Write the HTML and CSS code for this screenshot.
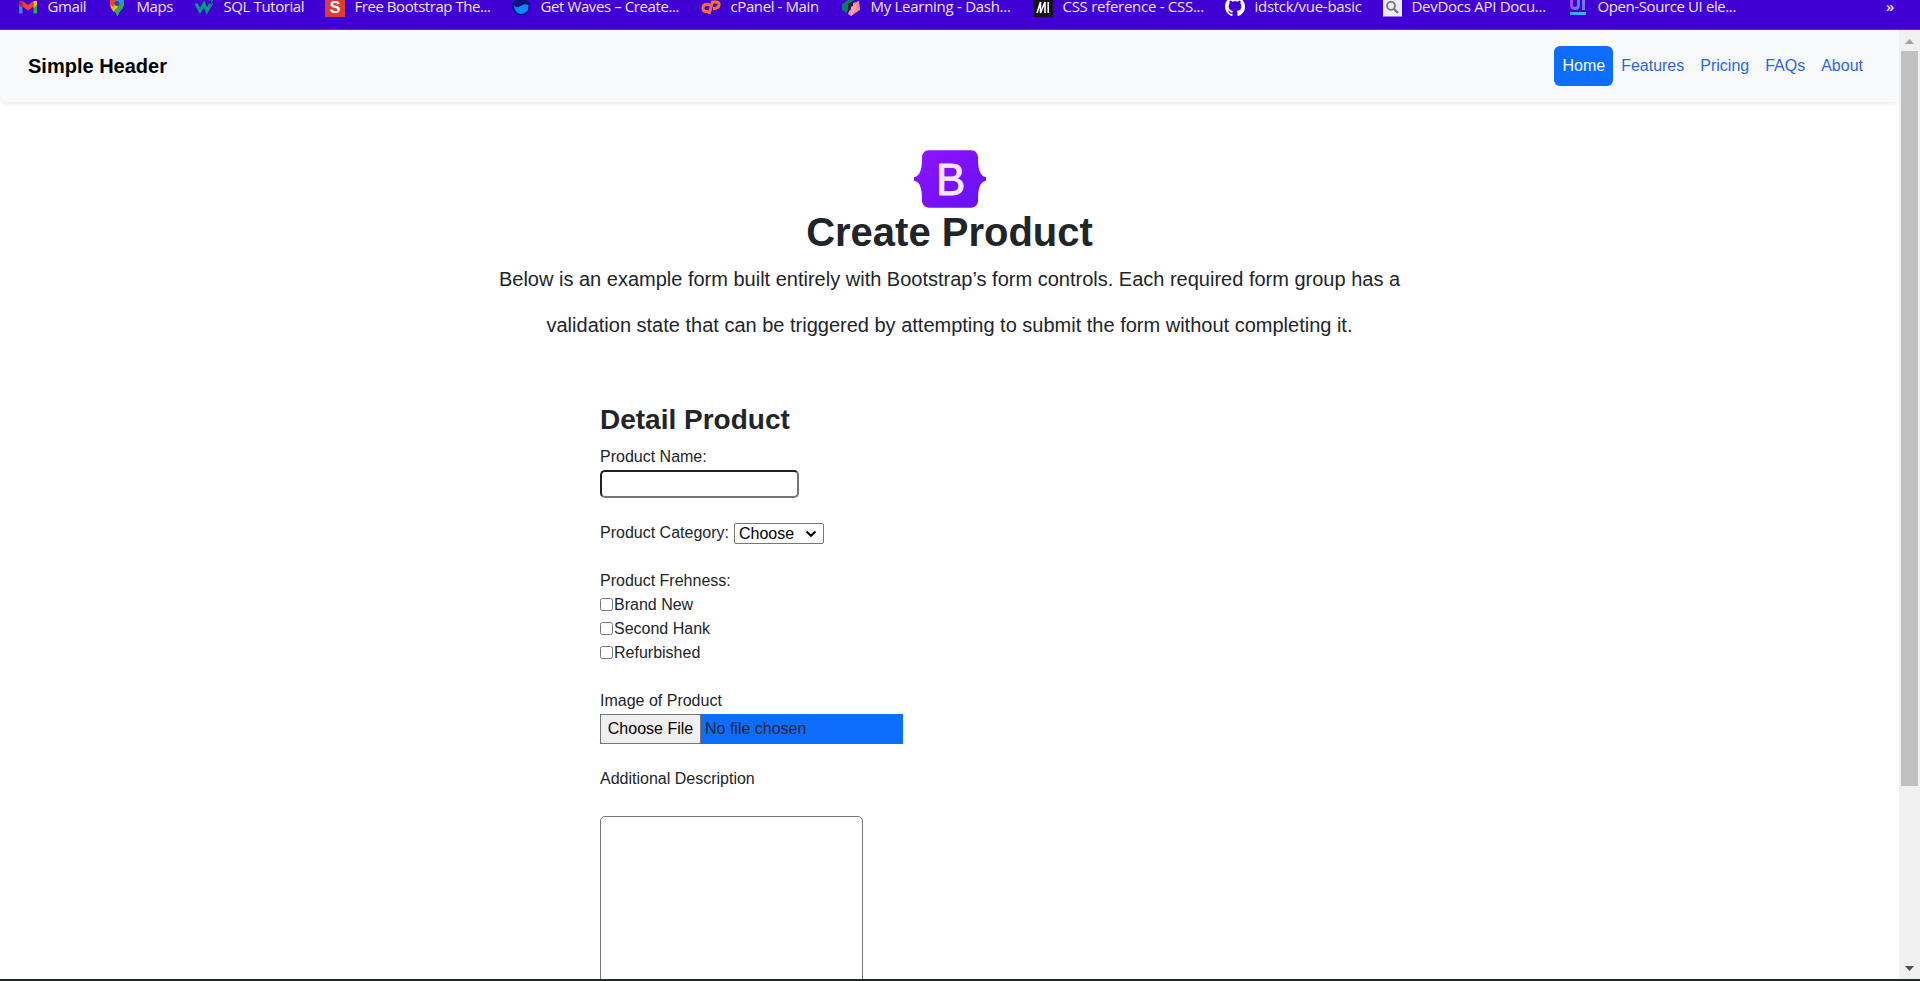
FILE: index.html
```html
<!DOCTYPE html>
<html lang="en">
<head>
<meta charset="utf-8">
<title>Create Product</title>
<link rel="stylesheet" href="styles.css">
</head>
<body>
<div class="bookmarks">
  <div class="bookmark"><svg class="fav" viewBox="0 0 20 20"><path d="M1 5v8.500h3.500V7z" fill="#4285f4"/><path d="M15.500 7v6.500H19V5z" fill="#34a853"/><path d="M1 1v4l3.500 3V1z" fill="#c5221f"/><path d="M4.500 1v5.500L10 10.500l5.500-4V1L10 5z" fill="#ea4335"/><path d="M15.500 1v7L19 5V1z" fill="#fbbc04"/></svg><span class="label">Gmail</span></div>
  <div class="bookmark"><svg class="fav" viewBox="0 0 20 20"><path d="M3 3Q3 8 7 12l5-6-3-5z" fill="#fbbc04"/><path d="M3 0v4l3 3 5-7z" fill="#ea4335"/><path d="M9 0h8v3l-6 5z" fill="#4285f4"/><path d="M16.500 1q2 5-3 10-2 2-3 5.500Q9 13 7 11l9-10z" fill="#34a853"/><circle cx="10" cy="3.500" r="2.500" fill="#2446b8"/></svg><span class="label">Maps</span></div>
  <div class="bookmark"><svg class="fav" viewBox="0 0 20 20"><path d="M2 3.500l4 7.500 4-7 3 7 3.500-7" fill="none" stroke="#079a80" stroke-width="3.200"/><path d="M15.500 0h3l-1.500 2.500q2 0 1.500 2-1 1.500-3 .3" fill="none" stroke="#079a80"/></svg><span class="label">SQL Tutorial</span></div>
  <div class="bookmark"><svg class="fav" viewBox="0 0 20 20"><path fill="#d93d38" d="M0 0h20v17H0z"/><text class="s-mark" x="10" y="13" text-anchor="middle">S</text></svg><span class="label tight">Free Bootstrap The...</span></div>
  <div class="bookmark"><svg class="fav" viewBox="0 0 20 20"><circle cx="10" cy="6.500" r="8.800" fill="#10107a"/><path d="M2.500 5q3 4 7 1t8-1q.5 8-6.500 9-7 .5-8.500-9" fill="#0b86ff"/></svg><span class="label">Get Waves – Create...</span></div>
  <div class="bookmark"><svg class="fav" viewBox="0 0 20 20"><path d="M9 4.500H5.500Q2 4.500 2 8.200q0 3.300 3 3.300h2M8 14l3.500-12H16q3.500 1 1.500 4.500-1 2-5.500 2" fill="none" stroke="#ff6c2c" stroke-width="3"/></svg><span class="label">cPanel - Main</span></div>
  <div class="bookmark"><svg class="fav" viewBox="0 0 20 20"><path d="M1 4l9-6 3 2-4 4v4l-4 5-4-3z" fill="#087a6b"/><path d="M10 4l8-3 1 9-9 6-3-2z" fill="#f08a96"/><path d="M7 4l5-3v6l-5 5z" fill="#22213e"/><path d="M10 7l5-3v6l-5 6z" fill="#f6a1a8"/></svg><span class="label wide">My Learning - Dash...</span></div>
  <div class="bookmark"><svg class="fav" viewBox="0 0 20 20"><path fill="#15141a" d="M0 0h20v17H0z"/><path d="M4 13L7.500 2v11L12 2v11M15.200 2v11" fill="none" stroke="#fff" stroke-width="1.600"/></svg><span class="label wide">CSS reference - CSS...</span></div>
  <div class="bookmark"><svg class="fav" viewBox="0 0 20 20"><path transform="translate(0 -3.500) scale(1.250)" fill="#fff" d="M8 0C3.580 0 0 3.580 0 8c0 3.540 2.290 6.530 5.470 7.590.4.070.550-.17.550-.38 0-.19-.01-.82-.01-1.490-2.010.37-2.530-.49-2.690-.94-.09-.23-.48-.94-.82-1.130-.28-.15-.68-.52-.01-.53.630-.01 1.080.58 1.230.82.720 1.210 1.870.87 2.330.66.070-.52.280-.87.510-1.070-1.780-.2-3.640-.89-3.640-3.950 0-.87.310-1.590.82-2.150-.08-.2-.36-1.020.08-2.120 0 0 .67-.21 2.200.82.640-.18 1.320-.27 2-.27s1.360.09 2 .27c1.530-1.040 2.200-.82 2.200-.82.440 1.100.16 1.920.08 2.120.51.560.82 1.270.82 2.150 0 3.070-1.870 3.750-3.650 3.950.29.250.54.730.54 1.480 0 1.070-.01 1.930-.01 2.200 0 .21.150.46.550.38A8 8 0 0 0 16 8c0-4.420-3.580-8-8-8"/></svg><span class="label wide">idstck/vue-basic</span></div>
  <div class="bookmark"><svg class="fav" viewBox="0 0 20 20"><path fill="#ececf2" d="M1 0h19v16.500H1z"/><circle cx="9" cy="5.800" r="4" fill="none" stroke="#777" stroke-width="1.800"/><path d="M12 9l4 4" stroke="#777" stroke-width="2.400"/></svg><span class="label wide">DevDocs API Docu...</span></div>
  <div class="bookmark"><svg class="fav" viewBox="0 0 20 20"><defs><linearGradient id="ui"><stop stop-color="#a050ff"/><stop offset="1" stop-color="#5c8cff"/></linearGradient><linearGradient id="ul"><stop stop-color="#4898ff"/><stop offset="1" stop-color="#20c8f8"/></linearGradient></defs><path d="M3.500-2v7q0 3.500 3.500 3.500T10.500 5v-7" fill="none" stroke="url(#ui)" stroke-width="2.800"/><path fill="#7c70ff" d="M14-1h3v11h-3z"/><path fill="url(#ul)" d="M2 12h16v3H2z"/></svg><span class="label">Open-Source UI ele...</span></div>
  <span class="more">»</span>
</div>
<div class="viewport">
  <div class="page">
    <header class="header">
      <span class="brand">Simple Header</span>
      <nav class="nav">
        <a class="link active">Home</a><a class="link">Features</a><a class="link">Pricing</a><a class="link">FAQs</a><a class="link">About</a>
      </nav>
    </header>
    <main>
      <section class="hero">
        <svg class="logo" viewBox="0 0 118 94"><defs><linearGradient id="bg" x1="0" y1="0" x2="1" y2="1"><stop stop-color="#9013fe"/><stop offset="1" stop-color="#6610f2"/></linearGradient></defs><path fill="url(#bg)" d="M24.509 0c-6.733 0-11.715 5.893-11.492 12.284.214 6.140-.064 14.092-2.066 20.577C8.943 39.365 5.547 43.485 0 44.014v5.972c5.547.529 8.943 4.649 10.951 11.153 2.002 6.485 2.280 14.437 2.066 20.577C12.794 88.106 17.776 94 24.510 94H93.500c6.733 0 11.714-5.893 11.491-12.284-.214-6.140.064-14.092 2.066-20.577 2.009-6.504 5.396-10.624 10.943-11.153v-5.972c-5.547-.529-8.934-4.649-10.943-11.153-2.002-6.484-2.280-14.437-2.066-20.577C105.214 5.894 100.233 0 93.500 0H24.508z"/><text class="logo-b" x="60" y="72.500" text-anchor="middle">B</text></svg>
        <h1 class="title">Create Product</h1>
        <p class="lead">Below is an example form built entirely with Bootstrap’s form controls. Each required form group has a<br>validation state that can be triggered by attempting to submit the form without completing it.</p>
      </section>
      <form class="form">
        <h2 class="subtitle">Detail Product</h2>
        <label class="row">Product Name:</label>
        <input class="name" type="text">
        <div class="row category">Product Category: <span class="picker"><select class="select"><option>Choose</option></select><svg class="chevron" viewBox="0 0 12 8"><path d="M1.500 1.500L6 5.800l4.500-4.300" fill="none" stroke="#000" stroke-width="2"/></svg></span></div>
        <div class="row">Product Frehness:</div>
        <label class="row check"><input class="box" type="checkbox">Brand New</label>
        <label class="row check"><input class="box" type="checkbox">Second Hank</label>
        <label class="row check"><input class="box" type="checkbox">Refurbished</label>
        <div class="row image-label">Image of Product</div>
        <input class="file" type="file">
        <div class="row desc-label">Additional Description</div>
        <textarea class="desc"></textarea>
      </form>
    </main>
  </div>
  <div class="scrollbar">
    <svg class="arrow" viewBox="0 0 21 21"><path d="M6 14l4.500-5 4.500 5z" fill="#a0a0a0"/></svg>
    <div class="thumb"></div>
    <svg class="arrow down" viewBox="0 0 21 21"><path d="M6 8h9l-4.500 5z" fill="#505050"/></svg>
  </div>
</div>
<div class="edge"></div>
</body>
</html>
```
FILE: styles.css
```css
* { box-sizing: border-box; }
body { margin: 0; height: 981px; overflow: hidden; display: flex; flex-direction: column; background: #fff; color: #212529; font: 16px/24px "Liberation Sans", Arial, sans-serif; }
.bookmarks { height: 30px; flex: none; display: grid; grid-template-columns: 89px 87px 131px 186px 190px 140px 192px 192px 157px 186px 317px auto; padding-left: 18px; background: #4000d4; border-bottom: 1px solid #6a22dc; }
.bookmark { display: flex; gap: 9.5px; height: 20px; }
.fav { width: 20px; height: 20px; flex: none; }
.label, .more { font: 15px/13px "Open Sans", "Noto Sans", sans-serif; color: #eee8ff; white-space: nowrap; letter-spacing: -0.4px; }
.tight { letter-spacing: -0.45px; }
.wide { letter-spacing: -0.28px; }
.more { font-weight: 600; line-height: 12px; padding-left: 1px; }
.s-mark { font: bold 16px "Liberation Sans", sans-serif; fill: #fff; }
.viewport { height: 949px; flex: none; display: flex; overflow: hidden; }
.page { flex: 1; overflow: hidden; }
.header { height: 72px; padding: 0 28px; display: flex; align-items: center; justify-content: space-between; background: #f8f9fb; border-radius: 0 0 6px 6px; box-shadow: 0 2px 4px rgba(0, 0, 0, .075); }
.brand { font-size: 20px; font-weight: bold; color: #000; }
.nav { display: flex; }
.link { padding: 8px; color: #2a67d8; }
.active { background: #0d6efd; color: #fff; border-radius: 6px; }
.hero { padding-top: 48px; display: flex; flex-direction: column; align-items: center; text-align: center; }
.logo { width: 72px; height: 58px; display: block; }
.logo-b { font: 72px "Liberation Sans", sans-serif; fill: #f3e6ff; stroke: #f3e6ff; stroke-width: 1.5px; }
.title { margin: 0; font-size: 40px; line-height: 48px; }
.lead { margin: 0; font-size: 20px; line-height: 46px; }
.form { width: 699px; margin: 55px auto 0; display: flex; flex-direction: column; align-items: flex-start; }
.subtitle { margin: 0 0 8px; font-size: 28px; line-height: 34px; }
.row { display: block; }
.name { width: 199px; height: 28px; margin-top: 1px; border: 2px inset #767676; border-radius: 5px; background: #fff; outline: none; }
.category { margin: 23px 0 24px; display: flex; align-items: center; gap: 5px; }
.picker { position: relative; display: flex; }
.select { appearance: none; width: 90px; height: 21px; font: 16px "Liberation Sans", sans-serif; padding: 0 0 0 4px; color: #000; background: #fff; border: 1px solid #767676; border-radius: 2px; }
.chevron { position: absolute; right: 7px; top: 7px; width: 12px; height: 8px; }
.check { display: flex; align-items: center; }
.box { width: 13px; height: 13px; margin: 0 1px 2px 0; }
.image-label { margin-top: 24px; }
.file { width: 303px; height: 30px; margin-top: 1px; background: #0d6efd; color: #212529; font: 16px/28px "Liberation Sans", sans-serif; }
.file::file-selector-button { height: 30px; width: 101px; padding: 0 6px; margin: 0 4px 0 0; font: 16px "Liberation Sans", sans-serif; background: #efefef; color: #000; border: 1px solid #767676; border-radius: 2px; }
.desc-label { margin-top: 23px; }
.desc { width: 263px; height: 250px; flex: none; margin: 25px 0 0; border: 1px solid #767676; border-radius: 5px; resize: none; }
.scrollbar { width: 21px; flex: none; display: flex; flex-direction: column; background: #f0f0f0; }
.arrow { width: 21px; height: 21px; flex: none; }
.thumb { width: 17px; height: 735px; margin-left: 2px; background: #c0c0c0; }
.down { margin-top: auto; }
.edge { height: 2px; background: #24262a; }
```
